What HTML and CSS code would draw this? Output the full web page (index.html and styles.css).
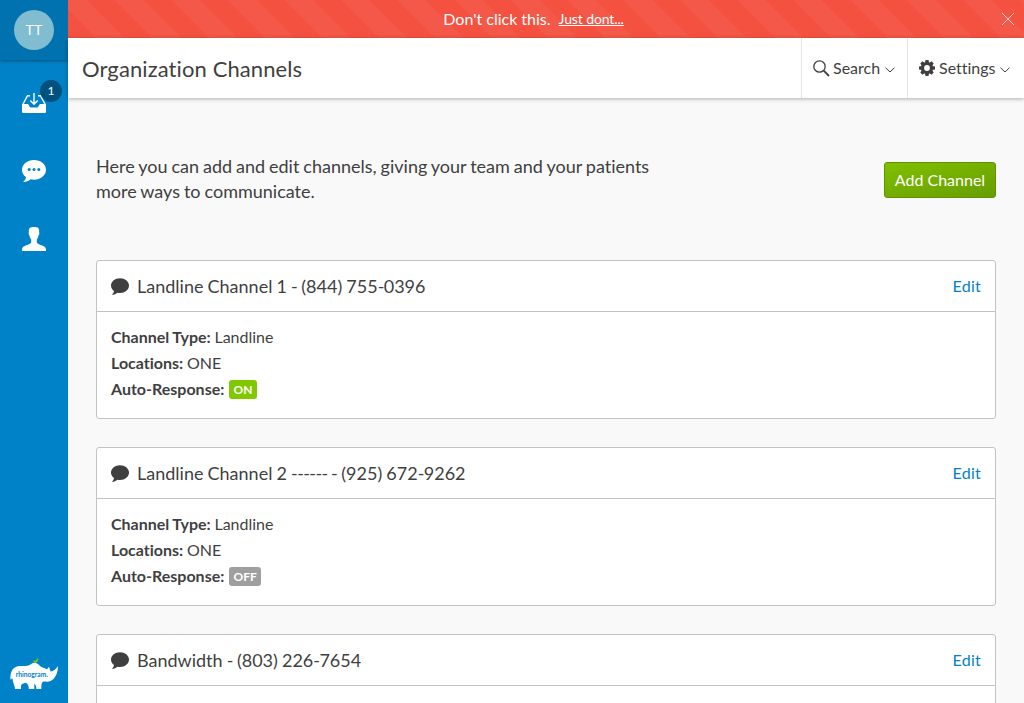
FILE: index.html
```html
<!DOCTYPE html>
<html lang="en">
<head>
<meta charset="utf-8">
<title>Organization Channels</title>
<link rel="stylesheet" href="styles.css">
</head>
<body>
<svg class="sprite" aria-hidden="true">
  <symbol id="bubble" viewBox="0 0 24 22"><path d="M12 0C5.400 0 0 4.300 0 9.700c0 3 1.500 5.600 4 7.400-.2 1.900-1.200 3.700-3 5 3 .1 5.700-1 7.600-2.800 1.100.3 2.200.4 3.400.4 6.600 0 12-4.500 12-10S18.600 0 12 0z"/></symbol>
  <symbol id="chevron" viewBox="0 0 10 6"><path d="M.5.700 5 5 9.500.7" fill="none" stroke="currentColor"/></symbol>
</svg>
<div class="app">
  <nav class="sidebar">
    <div class="profile"><span class="avatar">TT</span></div>
    <a class="nav-item">
      <svg width="24" height="20" viewBox="0 0 24 20"><path d="M8 2.700H5.500L.8 11.500M16 2.700h2.500l4.700 8.800M12 0v11M8.300 7.500 12 11.200l3.700-3.700" fill="none" stroke="#fff" stroke-width="1.400"/><path d="M0 11h5.500c1.500 0 1.800 3.500 3.500 3.500h6c1.700 0 2-3.500 3.500-3.500H24v8a1 1 0 0 1-1 1H1a1 1 0 0 1-1-1z" fill="#fff"/></svg>
      <span class="count">1</span>
    </a>
    <a class="nav-item"><svg width="24" height="22" viewBox="0 0 24 22"><use href="#bubble" fill="#fff"/><g fill="#0082c8"><circle cx="7.200" cy="9.500" r="1.500"/><circle cx="12" cy="9.500" r="1.500"/><circle cx="16.800" cy="9.500" r="1.500"/></g></svg></a>
    <a class="nav-item"><svg width="24" height="24" viewBox="0 0 24 24"><path d="M12 0C8 0 6.400 1.300 6.900 5c-.6.600-.2 3 .6 3.600.3 2 .9 3 1.700 3.900v3C8.500 18 0 18 0 22.500V24h24v-1.500C24 18 15.500 18 14.800 15.500v-3c.8-.9 1.400-1.900 1.700-3.900.8-.6 1.200-3 .6-3.600.5-3.700-1.100-5-5.100-5z" fill="#fff"/></svg></a>
    <svg class="logo" width="48" height="32" viewBox="0 0 48 32">
      <path d="M.5 21.500C0 15 2 10 7 8.500c5-1.500 8 .7 13-1.800C22 5.500 24 4.500 26 5c3 1 4 4 8 5l3 1.200L39 8.700l1.500 4.800c3-.2 5.800-2.500 7.500-5.500C48 15 45 22 39 23.500c-3 .5-5-.3-6.500.5-1.200 1.700-1.200 4-1.200 7h-5c0-2-.3-4-2-5.200V31h-5.500c0-3-.8-5-3-6.200-2.500.4-4.300 1.200-4.800 2.700V31H5C5 28 3 25.500 2.500 20.500c-.8-.5-1 1-2 1z" fill="#fff"/>
      <path d="M22.500 2.800 25.500 2.800 27.500.3l1.300.8-1 .8c0 1.800-1.200 2.600-2.600 2.700l-.5.800-.4-1z" fill="#8cc800"/>
      <text class="logo-text" x="5.800" y="19" textLength="32" lengthAdjust="spacingAndGlyphs">rhinogram.</text>
    </svg>
  </nav>
  <div class="page">
    <div class="banner">
      <span>Don't click this.</span><a class="banner-link">Just dont...</a>
      <svg class="close" width="12" height="12" viewBox="0 0 12 12"><path d="M0 0 12 12M12 0 0 12" stroke="#fff" fill="none"/></svg>
    </div>
    <header class="topbar">
      <h1>Organization Channels</h1>
      <a class="menu search"><svg width="17" height="17" viewBox="0 0 17 17" fill="none" stroke="currentColor"><circle cx="6.500" cy="6.500" r="5.700" stroke-width="1.300"/><path d="m10.700 10.700 5.300 5.300" stroke-width="1.800"/></svg><span>Search</span><svg class="chev" width="10" height="6"><use href="#chevron"/></svg></a>
      <a class="menu settings"><svg width="16" height="16" viewBox="-8 -8 16 16"><g fill="currentColor"><path id="tooth" d="M-1.500-8h3l.6 3h-4.200zM-1.500 8h3l.6-3h-4.200z"/><use href="#tooth" transform="rotate(45)"/><use href="#tooth" transform="rotate(90)"/><use href="#tooth" transform="rotate(135)"/></g><circle r="4.500" fill="none" stroke="currentColor" stroke-width="3.200"/></svg><span>Settings</span><svg class="chev" width="10" height="6"><use href="#chevron"/></svg></a>
    </header>
    <main class="content">
      <div class="intro">
        <p>Here you can add and edit channels, giving your team and your patients more ways to communicate.</p>
        <button class="add">Add Channel</button>
      </div>
      <section class="card">
        <div class="card-head"><svg width="18" height="17"><use href="#bubble"/></svg><h2>Landline Channel 1 <span class="dash">-</span> (844) 755<span class="dash">-</span>0396</h2><a>Edit</a></div>
        <div class="card-body">
          <div><b>Channel Type:</b> Landline</div><div><b>Locations:</b> ONE</div><div><b>Auto-Response:</b> <span class="tag on">ON</span></div>
        </div>
      </section>
      <section class="card">
        <div class="card-head"><svg width="18" height="17"><use href="#bubble"/></svg><h2>Landline Channel 2 <span class="dash">------ -</span> (925) 672<span class="dash">-</span>9262</h2><a>Edit</a></div>
        <div class="card-body">
          <div><b>Channel Type:</b> Landline</div><div><b>Locations:</b> ONE</div><div><b>Auto-Response:</b> <span class="tag off">OFF</span></div>
        </div>
      </section>
      <section class="card">
        <div class="card-head"><svg width="18" height="17"><use href="#bubble"/></svg><h2>Bandwidth <span class="dash">-</span> (803) 226<span class="dash">-</span>7654</h2><a>Edit</a></div>
        <div class="card-body"></div>
      </section>
    </main>
  </div>
</div>
</body>
</html>
```
FILE: styles.css
```css
* { box-sizing: border-box; }
body { margin: 0; font: 16px/26px Lato, sans-serif; font-variant-ligatures: none; color: #3f3f3f; }
h1, h2, p { margin: 0; font-weight: 400; }
.sprite { position: absolute; width: 0; height: 0; }
.app { display: flex; height: 703px; overflow: hidden; }

.sidebar { width: 68px; flex: none; background: #0082c8; display: flex; flex-direction: column; align-items: center; }
.profile { width: 100%; height: 60px; background: #0072b0; box-shadow: 0 1px 3px rgba(0,0,0,.4); display: flex; align-items: center; justify-content: center; margin-bottom: 9px; }
.avatar { width: 40px; height: 40px; border-radius: 50%; background: #80bdd1; color: #fff; font-size: 14px; line-height: 40px; text-align: center; letter-spacing: .3px; }
.nav-item { position: relative; width: 68px; height: 68px; display: flex; align-items: center; justify-content: center; }
.count { position: absolute; left: 40px; top: 11px; width: 22px; height: 22px; border-radius: 50%; background: #00517d; color: #fff; font-size: 12px; line-height: 22px; text-align: center; }
.logo { margin-top: auto; margin-bottom: 13px; }
.logo-text { font: 700 7px Lato, sans-serif; fill: #0082c8; }

.page { flex: 1; min-width: 0; display: flex; flex-direction: column; background: #f9f9f9; }
.banner { position: relative; flex: none; height: 38px; display: flex; align-items: center; justify-content: center; gap: 8px; padding-right: 25px; color: #fff; background: #f45140 repeating-linear-gradient(45deg, #f45140 0 20px, #f35848 20px 40px); }
.banner-link { font-size: 14px; letter-spacing: -.12px; text-decoration: underline; }
.close { position: absolute; right: 10px; top: 13px; opacity: .7; }
.topbar { flex: none; height: 60px; display: flex; background: #fff; box-shadow: 0 1px 4px rgba(0,0,0,.3); z-index: 1; }
h1 { flex: 1; padding-left: 14px; font-size: 22px; line-height: 62px; letter-spacing: .1px; }
.menu { display: flex; align-items: center; border-left: 1px solid #e5e5e5; padding-left: 11px; gap: 4px; line-height: 60px; }
.search { width: 106px; }
.search span { margin-left: -1px; }
.settings { width: 117px; }
.settings .chev { margin-left: 0; }
.chev { margin: 4px 0 0 1px; }

.content { padding: 56px 28px 0; }
.intro { display: flex; justify-content: space-between; align-items: flex-start; height: 106px; }
.intro p { width: 580px; font-size: 18px; line-height: 25px; word-spacing: -.65px; }
.add { width: 112px; height: 36px; margin-top: 8px; padding: 0 0 2px; border: 1px solid #5f9400; border-radius: 3px; background: linear-gradient(165deg, #80c000, #679d00); color: #fff; font: 16px Lato, sans-serif; }
.card { height: 159px; margin-bottom: 28px; background: #fff; border: 1px solid #c3c3c3; border-radius: 3px; }
.card-head { display: flex; align-items: center; height: 51px; padding: 0 14px; border-bottom: 1px solid #c3c3c3; }
.card-head svg { fill: #3f3f3f; margin-right: 8px; }
h2 { flex: 1; font-size: 18px; line-height: 50px; word-spacing: -.5px; }
.dash { letter-spacing: -.6px; }
.card-head a { color: #0082c8; letter-spacing: .25px; }
.card-body { padding: 12px 14px; }
.card-body div { height: 26px; word-spacing: -.4px; }
.tag { display: inline-block; height: 19px; margin-left: 1px; padding: 0 4.5px; border-radius: 3px; color: #fff; font-size: 12px; font-weight: 700; line-height: 20px; vertical-align: 1px; }
.on { background: #80c800; }
.off { background: #9f9f9f; }
```
